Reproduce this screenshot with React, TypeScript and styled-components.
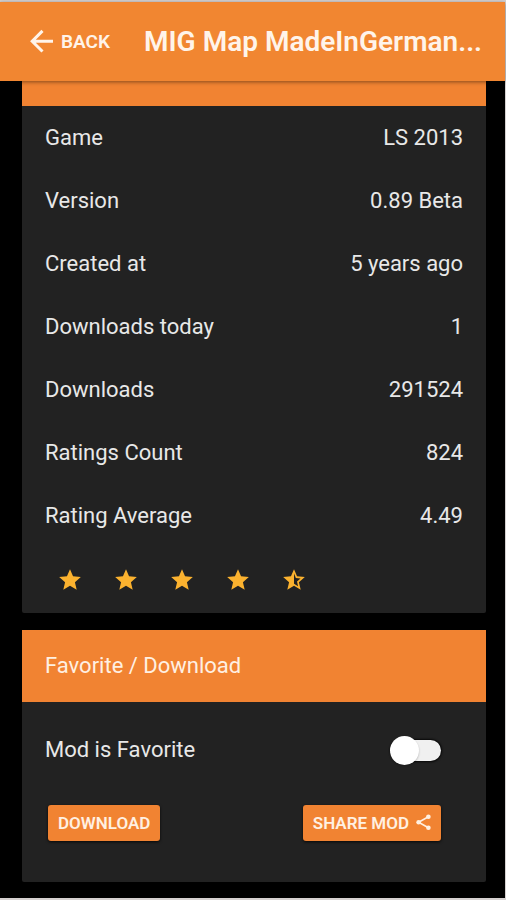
import React from "react";
import styled, { createGlobalStyle } from "styled-components";

const GlobalStyle = createGlobalStyle`
  *, *::before, *::after { box-sizing: border-box; }
  body {
    margin: 0;
    background: #000;
    color: #e8e8e8;
    font-family: Roboto, "Liberation Sans", sans-serif;
    font-size: 22px;
    line-height: 28px;
  }
`;

const Screen = styled.div`
  min-height: 100vh;
  background: #000;
  border: solid #d6d1d0;
  border-width: 2px 1px 2px 0;
`;

const AppBar = styled.header`
  position: relative;
  z-index: 1;
  display: flex;
  align-items: center;
  gap: 34px;
  height: 79px;
  padding: 0 20px 0 28px;
  background: #f18631;
  color: #fff4ea;
  box-shadow: 0 1px 4px rgba(0, 0, 0, 0.45);
`;

const BackButton = styled.button`
  display: flex;
  align-items: center;
  gap: 6px;
  flex: none;
  padding: 0;
  border: 0;
  background: none;
  color: inherit;
  font: 600 19px/24px Roboto, "Liberation Sans", sans-serif;
  cursor: pointer;
`;

const Title = styled.h1`
  margin: 0;
  min-width: 0;
  overflow: hidden;
  white-space: nowrap;
  font-size: 28px;
  font-weight: 600;
  line-height: 36px;
`;

const Content = styled.main`
  padding: 0 19px 15px 22px;
`;

const Card = styled.section`
  background: #222;
  border-radius: 0 0 2px 2px;

  & + & { margin-top: 17px; }
`;

const CardEdge = styled.div`
  height: 25px;
  background: #f18332;
`;

const CardHeader = styled.h2`
  display: flex;
  align-items: center;
  height: 72px;
  margin: 0;
  padding: 0 23px;
  background: #f18332;
  color: #fff0e2;
  font-size: 22px;
  font-weight: 400;
`;

const Details = styled.dl`
  margin: 0;
`;

const Row = styled.div`
  display: flex;
  align-items: center;
  justify-content: space-between;
  height: 63px;
  padding: 0 23px;
`;

const Term = styled.dt`
  margin: 0;
`;

const Value = styled.dd`
  margin: 0;
`;

const Stars = styled.div`
  display: flex;
  align-items: center;
  gap: 30px;
  height: 66px;
  padding: 0 35px;
  color: #fbb22f;
`;

const FavoriteRow = styled.label`
  display: flex;
  align-items: center;
  justify-content: space-between;
  height: 96px;
  padding: 0 45px 0 23px;
  cursor: pointer;
`;

const Switch = styled.input`
  appearance: none;
  display: flex;
  align-items: center;
  width: 50px;
  height: 21px;
  margin: 0;
  border-radius: 11px;
  background: #f0f0f0;
  box-shadow: 0 0 2px 1px rgba(0, 0, 0, 0.8);
  cursor: pointer;

  &::before {
    content: "";
    flex: none;
    width: 29px;
    height: 29px;
    margin-left: -1px;
    border-radius: 50%;
    background: #fff;
    box-shadow: 0 1px 2px rgba(0, 0, 0, 0.25);
  }

  &:checked { background: #f8c198; }
  &:checked::before { margin-left: 23px; background: #f18332; }
`;

const Actions = styled.div`
  display: flex;
  justify-content: space-between;
  padding: 7px 45px 41px 26px;
`;

const ActionButton = styled.button`
  display: flex;
  align-items: center;
  gap: 7px;
  height: 36px;
  padding: 0 10px;
  border: 0;
  border-radius: 3px;
  background: #f18332;
  color: #fff0e2;
  font: 600 17px/20px Roboto, "Liberation Sans", sans-serif;
  box-shadow: 0 1px 3px rgba(0, 0, 0, 0.8);
  cursor: pointer;
`;

const BackIcon = () => (
  <svg width="27" height="26" viewBox="0 0 27 26" fill="none" stroke="currentColor" strokeWidth="3" aria-hidden="true">
    <path d="M25 12.2H5M14.5 1.9 4.2 12.2l10.3 10.3" />
  </svg>
);

const ShareIcon = () => (
  <svg width="15" height="18" viewBox="0 0 15 18" fill="currentColor" aria-hidden="true">
    <path d="M12.4 2.8 2.6 8.2l9.8 5.6" fill="none" stroke="currentColor" strokeWidth="1.6" />
    <circle cx="12.4" cy="2.8" r="2.3" />
    <circle cx="2.6" cy="8.2" r="2.3" />
    <circle cx="12.4" cy="13.8" r="2.3" />
  </svg>
);

const Star = ({ half = false }: { half?: boolean }) => (
  <svg width="26" height="26" viewBox="0 0 24 24" fill="currentColor" aria-hidden="true">
    {half ? (
      <path d="M22 9.24l-7.19-.62L12 2 9.19 8.63 2 9.24l5.46 4.73L5.82 21 12 17.27 18.18 21l-1.63-7.03L22 9.24zM12 15.4V6.1l1.71 4.04 4.38.38-3.32 2.88 1 4.28L12 15.4z" />
    ) : (
      <path d="M12 17.27L18.18 21l-1.64-7.03L22 9.24l-7.19-.61L12 2 9.19 8.63 2 9.24l5.46 4.73L5.82 21z" />
    )}
  </svg>
);

const details = [
  ["Game", "LS 2013"],
  ["Version", "0.89 Beta"],
  ["Created at", "5 years ago"],
  ["Downloads today", "1"],
  ["Downloads", "291524"],
  ["Ratings Count", "824"],
  ["Rating Average", "4.49"],
];

export default function App() {
  return (
    <>
      <GlobalStyle />
      <Screen>
        <AppBar>
          <BackButton type="button"><BackIcon />BACK</BackButton>
          <Title>MIG Map MadeInGerman...</Title>
        </AppBar>
        <Content>
          <Card>
            <CardEdge />
            <Details>
              {details.map(([term, value]) => (
                <Row key={term}>
                  <Term>{term}</Term>
                  <Value>{value}</Value>
                </Row>
              ))}
            </Details>
            <Stars role="img" aria-label="4.49 of 5 stars">
              <Star /><Star /><Star /><Star /><Star half />
            </Stars>
          </Card>
          <Card>
            <CardHeader>Favorite / Download</CardHeader>
            <FavoriteRow>
              Mod is Favorite
              <Switch type="checkbox" />
            </FavoriteRow>
            <Actions>
              <ActionButton type="button">DOWNLOAD</ActionButton>
              <ActionButton type="button">SHARE MOD<ShareIcon /></ActionButton>
            </Actions>
          </Card>
        </Content>
      </Screen>
    </>
  );
}
